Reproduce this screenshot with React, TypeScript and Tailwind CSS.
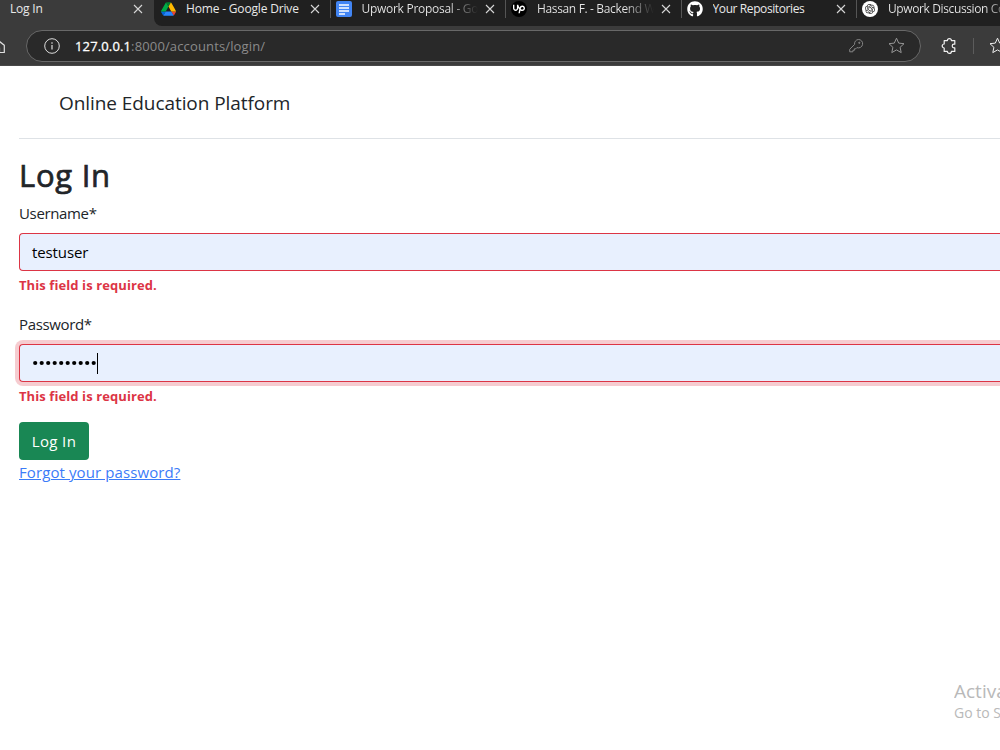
import type { ReactNode } from 'react';
import { FaGithub } from 'react-icons/fa';
import { RiOpenaiFill } from 'react-icons/ri';
import { SiUpwork } from 'react-icons/si';

function DriveIcon() {
  return (
    <svg viewBox="0 0 87.3 78" className="h-[14px] w-[15px]">
      <path d="m6.6 66.85 3.85 6.65c.8 1.4 1.95 2.5 3.3 3.3l13.75-23.8h-27.5c0 1.55.4 3.1 1.2 4.5z" fill="#0066da" />
      <path d="m43.65 25-13.75-23.8c-1.35.8-2.5 1.9-3.3 3.3l-25.4 44a9 9 0 0 0-1.2 4.5h27.5z" fill="#00ac47" />
      <path d="m73.55 76.8c1.35-.8 2.5-1.9 3.3-3.3l1.6-2.75 7.65-13.25c.8-1.4 1.2-2.95 1.2-4.5h-27.5l5.85 11.5z" fill="#ea4335" />
      <path d="m43.65 25 13.75-23.8c-1.35-.8-2.9-1.2-4.5-1.2h-18.5c-1.6 0-3.15.45-4.5 1.2z" fill="#00832d" />
      <path d="m59.8 53h-32.3l-13.75 23.8c1.35.8 2.9 1.2 4.5 1.2h50.8c1.6 0 3.15-.45 4.5-1.2z" fill="#2684fc" />
      <path d="m73.4 26.5-12.7-22c-.8-1.4-1.95-2.5-3.3-3.3l-13.75 23.8 16.15 28h27.45c0-1.55-.4-3.1-1.2-4.5z" fill="#ffba00" />
    </svg>
  );
}

function DocsIcon() {
  return (
    <svg viewBox="0 0 16 16" className="size-4">
      <rect width="16" height="16" rx="2" fill="#4285f4" />
      <path d="M3 4h10M3 7h10M3 10h10M3 13h6" stroke="#fff" strokeWidth="1.5" />
    </svg>
  );
}

function UpworkIcon() {
  return (
    <span className="flex size-4 items-center justify-center rounded-full bg-black text-white">
      <SiUpwork size={12} />
    </span>
  );
}

function ChatIcon() {
  return (
    <span className="flex size-4 items-center justify-center rounded-full bg-white text-[#222]">
      <RiOpenaiFill size={12} />
    </span>
  );
}

function CloseIcon() {
  return (
    <svg viewBox="0 0 10 10" className="size-[10px] shrink-0">
      <path d="M1 1l8 8M9 1l-8 8" stroke="#d6d6d6" strokeWidth="1.1" fill="none" />
    </svg>
  );
}

function StarIcon({ className }: { className: string }) {
  return (
    <svg viewBox="0 0 17 17" className={`size-[17px] shrink-0 ${className}`} fill="none" stroke="currentColor" strokeLinejoin="round">
      <path d="m8.5 1.2 2.2 4.9 5.3.6-3.9 3.6 1.1 5.3-4.7-2.7-4.7 2.7 1.1-5.3L1 6.7l5.3-.6z" />
    </svg>
  );
}

function KeyIcon() {
  return (
    <svg viewBox="0 0 16 16" className="size-4" fill="none" stroke="#858585" strokeLinejoin="round">
      <path d="M10.3 1.5a4.2 4.2 0 1 1-1.4 8.1L7.8 10.8H6.4v1.5H4.9v1.5H1.7v-2.5L6.6 6.4a4.2 4.2 0 0 1 3.7-4.9z" />
      <circle cx="11.3" cy="4.8" r=".6" fill="#858585" />
    </svg>
  );
}

function PuzzleIcon() {
  return (
    <svg viewBox="0 0 16 16" className="size-4" fill="none" stroke="#f0f0f0" strokeWidth="1.2" strokeLinejoin="round">
      <path d="M3.2 2.6H6.4a2 2 0 0 1 4 0h3.4v3.6h-.8a1.8 1.8 0 0 0 0 3.6h.8v3.6h-3.4a2 2 0 0 1-4 0H3.2V10a2 2 0 0 1 0-4z" />
    </svg>
  );
}

interface TabProps {
  title: string;
  icon: ReactNode;
  titleClass: string;
  closable?: boolean;
}

function Tab({ title, icon, titleClass, closable = true }: TabProps) {
  return (
    <div className="flex h-[18px] w-[175.5px] shrink-0 items-center border-r border-[#555] pr-[10px] pl-[5px]">
      <span className="flex w-4 shrink-0 justify-center">{icon}</span>
      <span className={`ml-[10px] flex-1 overflow-hidden whitespace-nowrap ${titleClass}`}>{title}</span>
      {closable && <CloseIcon />}
    </div>
  );
}

const fade = 'mr-[7px] bg-linear-to-r from-[#e8e8e8] from-75% to-[#202020] bg-clip-text text-transparent';

const tabs: TabProps[] = [
  { title: 'Home - Google Drive', icon: <DriveIcon />, titleClass: 'tracking-[-0.17px]' },
  { title: 'Upwork Proposal - Go', icon: <DocsIcon />, titleClass: `${fade} tracking-[-0.28px]` },
  { title: 'Hassan F. - Backend W', icon: <UpworkIcon />, titleClass: `${fade} tracking-[-0.35px]` },
  { title: 'Your Repositories', icon: <FaGithub size={16} color="#fff" />, titleClass: 'tracking-[-0.4px]' },
  {
    title: 'Upwork Discussion Co',
    icon: <ChatIcon />,
    titleClass:
      'bg-linear-to-r from-[#e8e8e8] from-[98px] to-[#202020] to-[125px] bg-clip-text tracking-[-0.38px] text-transparent',
    closable: false,
  },
];

function TabStrip() {
  return (
    <div className="flex h-[26px] bg-[#202020] text-[12px] leading-[18px] text-[#e8e8e8]">
      <div className="h-[26px] w-[154px] shrink-0 bg-[#3b3b3b]">
        <div className="flex h-[18px] items-center justify-between pr-[11px] pl-[10px]">
          <span className="tracking-[-0.2px]">Log In</span>
          <CloseIcon />
        </div>
      </div>
      <div className="flex flex-1 overflow-hidden bg-[#3b3b3b]">
        <div className="flex flex-1 overflow-hidden rounded-bl-[8px] bg-[#202020] pl-px">
          {tabs.map((tab) => (
            <Tab key={tab.title} {...tab} />
          ))}
        </div>
      </div>
    </div>
  );
}

function Toolbar() {
  return (
    <div className="flex h-10 items-center overflow-hidden border-b border-[#484848] bg-[#3b3b3b]">
      <div className="flex w-[26px] shrink-0">
        <svg viewBox="0 0 16 16" className="-ml-[11px] size-4" fill="none" stroke="#e0e0e0" strokeWidth="1.2" strokeLinejoin="round">
          <path d="M2.5 6.3 8 1.5l7.3 5.8v7.2h-4.8V9.8h-3v4.7H2.5z" />
        </svg>
      </div>
      <div className="flex h-8 w-[895px] shrink-0 items-center rounded-full border border-[#686868] bg-[#292929] pr-[15px] pl-[17px]">
        <svg viewBox="0 0 16 16" className="size-4" fill="none" stroke="#ddd">
          <circle cx="8" cy="8" r="7.3" />
          <path d="M8 7v4.5M8 4.3v1.4" strokeWidth="1.2" />
        </svg>
        <p className="ml-[15px] flex-1 text-[13px] leading-5 tracking-[0.14px] text-[#8b8b8b]">
          <span className="text-white [-webkit-text-stroke:0.3px]">127.0.0.1</span>:8000/accounts/login/
        </p>
        <KeyIcon />
        <StarIcon className="ml-6 text-[#969696]" />
      </div>
      <div className="ml-5 flex shrink-0 items-center">
        <PuzzleIcon />
        <div className="ml-4 h-4 w-px bg-[#5c5c5c]" />
        <StarIcon className="ml-[15px] text-[#eee]" />
      </div>
    </div>
  );
}

interface FieldProps {
  label: string;
  focused?: boolean;
  children: ReactNode;
}

function Field({ label, focused, children }: FieldProps) {
  return (
    <div className="mb-4">
      <div className="mb-2 text-[15px] leading-6 tracking-[-0.35px]">{label}</div>
      <div
        className={`flex h-[38px] items-center rounded-l-[4px] border border-r-0 border-[#dc3545] bg-[#e8f0fe] pl-3 text-[15px] tracking-[-0.1px] text-black ${
          focused ? 'ring-4 ring-[#dc3545]/25' : ''
        }`}
      >
        {children}
      </div>
      <p className="mt-1 text-[13px] leading-[21px] font-bold tracking-[0.09px] text-[#dc3545]">This field is required.</p>
    </div>
  );
}

export default function App() {
  return (
    <div className="flex h-[750px] w-[1000px] flex-col overflow-hidden bg-white font-['Open_Sans','Noto_Sans',sans-serif] text-[#212529]">
      <TabStrip />
      <Toolbar />
      <main className="flex-1 pl-[19px]">
        <header className="mb-4 h-[73px] border-b border-[#dee2e6] pt-[22px] pl-10">
          <span className="block text-[19px] leading-[30px] tracking-[-0.07px]">Online Education Platform</span>
        </header>
        <h2 className="mb-[7px] pt-px text-[31px] leading-[38px] font-medium tracking-[0.75px] [-webkit-text-stroke:0.7px]">Log In</h2>
        <Field label="Username*">
          <span>testuser</span>
        </Field>
        <Field label="Password*" focused>
          <svg viewBox="0 0 65 6" className="h-[6px] w-[65px]">
            {Array.from({ length: 10 }, (_, i) => (
              <circle key={i} cx={3.2 + i * 6.5} cy="3" r="2.1" />
            ))}
          </svg>
          <span className="h-[21px] w-px bg-black" />
        </Field>
        <button className="-mt-px flex h-[38px] w-[70px] items-center justify-center rounded-[4px] bg-[#198754] text-[15px] tracking-[0.35px] text-white">
          Log In
        </button>
        <a className="block w-fit text-[15px] leading-6 tracking-[0.1px] text-[#3b7bf8] underline">Forgot your password?</a>
      </main>
      <aside className="mb-[27px] ml-[954px] w-[46px] overflow-hidden whitespace-nowrap text-[#b9b9b9]">
        <p className="text-[19px] leading-6">Activate Windows</p>
        <p className="text-[14px] leading-5">Go to Settings to activate Windows.</p>
      </aside>
    </div>
  );
}
